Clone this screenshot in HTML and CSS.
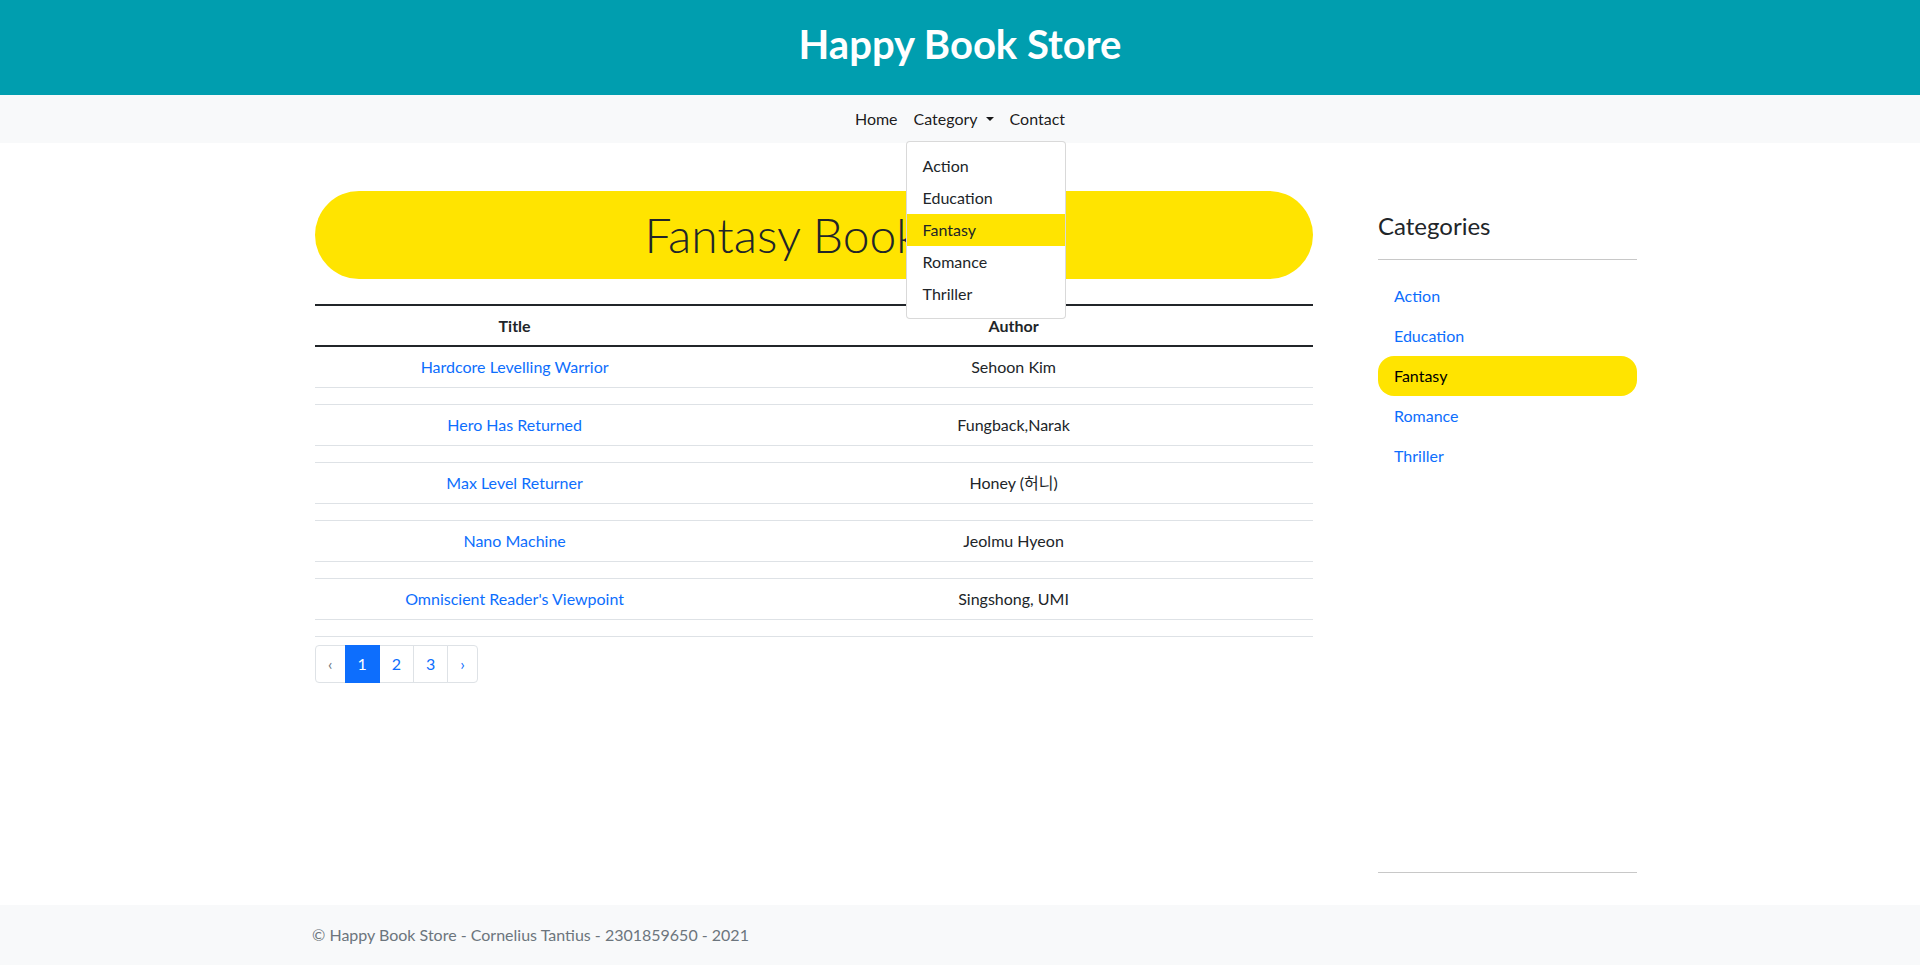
FILE: index.html
```html
<!DOCTYPE html>
<html lang="en">
<head>
<meta charset="utf-8">
<title>Happy Book Store</title>
<link rel="stylesheet" href="styles.css">
</head>
<body>
<header class="site-header">
  <h1 class="site-title">Happy Book Store</h1>
</header>
<nav class="navbar">
  <ul class="nav-list">
    <li class="nav-item"><a class="nav-link" href="#">Home</a></li>
    <li class="nav-item">
      <a class="nav-link" href="#">Category<span class="caret"></span></a>
      <ul class="dropdown-menu">
        <li><a class="dropdown-item" href="#">Action</a></li>
        <li><a class="dropdown-item" href="#">Education</a></li>
        <li><a class="dropdown-item active" href="#">Fantasy</a></li>
        <li><a class="dropdown-item" href="#">Romance</a></li>
        <li><a class="dropdown-item" href="#">Thriller</a></li>
      </ul>
    </li>
    <li class="nav-item"><a class="nav-link" href="#">Contact</a></li>
  </ul>
</nav>
<div class="page">
  <main class="content">
    <h2 class="banner">Fantasy Books</h2>
    <table class="book-table">
      <colgroup><col class="col-title"><col class="col-author"></colgroup>
      <thead>
        <tr><th>Title</th><th>Author</th></tr>
      </thead>
      <tbody>
        <tr><td><a class="book-link" href="#">Hardcore Levelling Warrior</a></td><td>Sehoon Kim</td></tr>
        <tr class="spacer"><td></td><td></td></tr>
        <tr><td><a class="book-link" href="#">Hero Has Returned</a></td><td>Fungback,Narak</td></tr>
        <tr class="spacer"><td></td><td></td></tr>
        <tr><td><a class="book-link" href="#">Max Level Returner</a></td><td>Honey (허니)</td></tr>
        <tr class="spacer"><td></td><td></td></tr>
        <tr><td><a class="book-link" href="#">Nano Machine</a></td><td>Jeolmu Hyeon</td></tr>
        <tr class="spacer"><td></td><td></td></tr>
        <tr><td><a class="book-link" href="#">Omniscient Reader's Viewpoint</a></td><td>Singshong, UMI</td></tr>
        <tr class="spacer"><td></td><td></td></tr>
      </tbody>
    </table>
    <ul class="pagination">
      <li><span class="page-link disabled">&lsaquo;</span></li>
      <li><span class="page-link active">1</span></li>
      <li><a class="page-link" href="#">2</a></li>
      <li><a class="page-link" href="#">3</a></li>
      <li><a class="page-link" href="#">&rsaquo;</a></li>
    </ul>
  </main>
  <aside class="sidebar">
    <h4 class="sidebar-title">Categories</h4>
    <hr class="rule">
    <ul class="side-list">
      <li><a class="side-link" href="#">Action</a></li>
      <li><a class="side-link" href="#">Education</a></li>
      <li><a class="side-link active" href="#">Fantasy</a></li>
      <li><a class="side-link" href="#">Romance</a></li>
      <li><a class="side-link" href="#">Thriller</a></li>
    </ul>
    <hr class="rule rule-bottom">
  </aside>
</div>
<footer class="site-footer">
  <div class="footer-inner">&copy; Happy Book Store - Cornelius Tantius - 2301859650 - 2021</div>
</footer>
</body>
</html>
```
FILE: styles.css
```css
*, *::before, *::after { box-sizing: border-box; }

body {
  margin: 0;
  min-height: 100vh;
  display: flex;
  flex-direction: column;
  font-family: Lato, "Noto Sans", "Noto Sans CJK KR", sans-serif;
  font-size: 16px;
  line-height: 1.5;
  color: #212529;
  background: #fff;
}

.site-header {
  background: #009eaf;
  padding: 20px 0 27px;
  text-align: center;
}
.site-title {
  margin: 0;
  font-size: 40px;
  line-height: 48px;
  font-weight: 700;
  color: #fff;
}

.navbar {
  background: #f8f9fa;
  height: 48px;
  display: flex;
  justify-content: center;
  align-items: center;
  position: relative;
  z-index: 10;
}
.nav-list {
  list-style: none;
  margin: 0;
  padding: 0;
  display: flex;
}
.nav-item { position: relative; }
.nav-link {
  display: block;
  padding: 8px;
  line-height: 24px;
  color: rgba(0, 0, 0, .9);
  text-decoration: none;
}
.caret {
  display: inline-block;
  margin-left: 8px;
  vertical-align: .255em;
  border-top: .3em solid;
  border-right: .3em solid transparent;
  border-left: .3em solid transparent;
}
.dropdown-menu {
  position: absolute;
  top: 100%;
  left: 0;
  margin: 2px 0 0;
  padding: 8px 0;
  min-width: 160px;
  list-style: none;
  background: #fff;
  border: 1px solid rgba(0, 0, 0, .15);
  border-radius: 4px;
}
.dropdown-item {
  display: block;
  padding: 4px 16px;
  line-height: 24px;
  color: #212529;
  text-decoration: none;
  white-space: nowrap;
}
.dropdown-item.active { background: #ffe400; }

.page {
  flex: 1;
  display: flex;
  gap: 65px;
  width: 1322px;
  margin-left: calc(50% - 645px);
  padding-top: 48px;
}
.content { width: 998px; }

.banner {
  margin: 0 0 25px;
  padding: 15px 59px 15px 15px;
  background: #ffe400;
  border-radius: 44px;
  text-align: center;
  font-size: 48px;
  font-weight: 300;
  line-height: 1.2;
}

.book-table {
  width: 100%;
  table-layout: fixed;
  border-collapse: separate;
  border-spacing: 0;
  margin-bottom: 8px;
}
.col-title { width: 40%; }
.col-author { width: 60%; }
.book-table th,
.book-table td {
  text-align: center;
  padding: 8px;
  line-height: 24px;
}
.book-table th {
  font-weight: 700;
  padding: 8px 8px 7px;
  border-top: 2px solid #212529;
  border-bottom: 2px solid #212529;
}
.book-table td { border-bottom: 1px solid #dee2e6; }
.book-link { color: #0d6efd; text-decoration: none; }

.pagination {
  display: flex;
  list-style: none;
  margin: 0;
  padding: 0;
}
.page-link {
  display: block;
  position: relative;
  padding: 6px 12px;
  margin-left: -1px;
  line-height: 24px;
  color: #0d6efd;
  background: #fff;
  border: 1px solid #dee2e6;
  text-decoration: none;
}
.pagination li:first-child .page-link {
  margin-left: 0;
  border-radius: 4px 0 0 4px;
}
.pagination li:last-child .page-link { border-radius: 0 4px 4px 0; }
.page-link.active {
  z-index: 1;
  color: #fff;
  background: #0d6efd;
  border-color: #0d6efd;
}
.page-link.disabled { color: #6c757d; }

.sidebar {
  width: 259px;
  display: flex;
  flex-direction: column;
}
.sidebar-title {
  margin: 21px 0 0;
  font-size: 24px;
  font-weight: 400;
  line-height: 1.2;
}
.rule {
  margin: 18px 0 16px;
  border: 0;
  border-top: 1px solid #c8c8c8;
}
.rule-bottom { margin: auto 0 32px; }
.side-list {
  list-style: none;
  margin: 0;
  padding: 0;
}
.side-link {
  display: block;
  padding: 8px 16px;
  line-height: 24px;
  color: #0d6efd;
  text-decoration: none;
  border-radius: 16px;
}
.side-link.active { background: #ffe400; color: #000; }

.site-footer {
  height: 60px;
  background: #f8f9fa;
  display: flex;
  align-items: center;
}
.footer-inner {
  width: 1320px;
  margin: 0 auto;
  padding: 0 12px;
  color: #6c757d;
}
```
